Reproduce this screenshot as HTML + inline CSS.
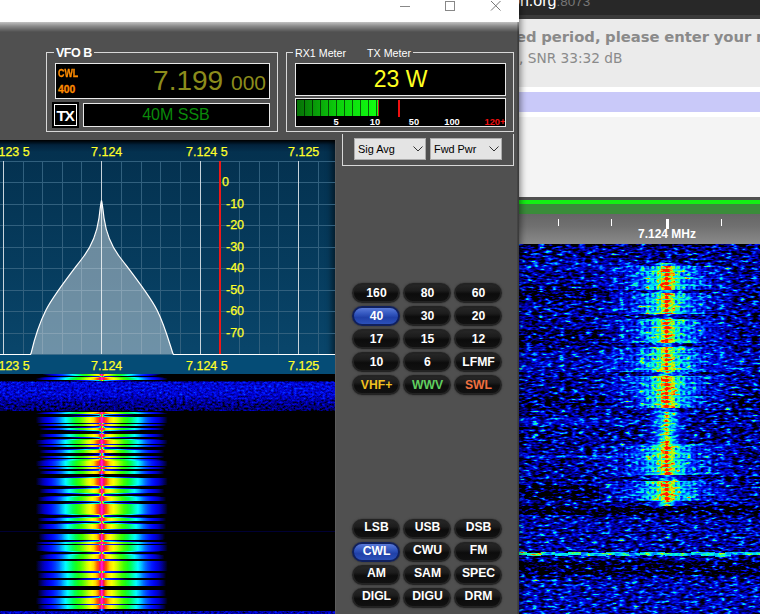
<!DOCTYPE html>
<html><head><meta charset="utf-8">
<style>
html,body{margin:0;padding:0;}
body{width:760px;height:614px;overflow:hidden;position:relative;background:#f4f4f4;font-family:"Liberation Sans",sans-serif;}
.abs{position:absolute;}
#br{left:519px;top:0;width:241px;height:614px;background:#f4f4f4;overflow:hidden;}
#win{left:0;top:0;width:519px;height:614px;background:#505050;overflow:hidden;box-shadow:0 0 7px 1px rgba(0,0,0,.55);}
.gb{position:absolute;border:1px solid #d8d8d8;box-sizing:border-box;}
.lbl{position:absolute;background:#505050;color:#fff;font-size:10.7px;line-height:12px;white-space:nowrap;}
.blk{position:absolute;background:#000;border:1px solid #e8e8e8;box-sizing:border-box;}
.pill{position:absolute;width:48px;height:20px;border-radius:10px;box-sizing:border-box;background:linear-gradient(#262626 0%,#1c1c1c 35%,#0c0c0c 55%,#111 100%);border:2px solid #232323;color:#fff;font-weight:bold;font-size:12.2px;line-height:16px;text-align:center;box-shadow:0 0 1.5px 0.5px rgba(50,50,50,.7);padding-left:1px;}
.pill.sel{background:linear-gradient(#5a7ad8 0%,#3458c0 35%,#2040a8 60%,#2c50b8 100%);border-color:#10205c;}
.combo{position:absolute;height:22px;background:#e4e4e4;border:1px solid #adadad;box-sizing:border-box;font-size:10.9px;line-height:20px;color:#000;padding-left:3px;}
.yl{position:absolute;color:#ffff28;font-size:12.5px;line-height:14px;white-space:nowrap;-webkit-text-stroke:0.25px #ffff28;}
</style></head><body>

<!-- browser behind -->
<div id="br" class="abs">
  <div class="abs" style="left:0;top:0;width:241px;height:15px;background:#282828;"></div>
  <div class="abs" style="left:0;top:15px;width:241px;height:4px;background:#3a3a3a;"></div>
  <div class="abs" style="left:-8px;top:-7.5px;color:#fff;font-size:16px;line-height:16px;white-space:nowrap;">on.org<span style="color:#777;font-size:13.5px">:8073</span></div>
  <div class="abs" style="left:0;top:19px;width:241px;height:68px;background:#ebebeb;"></div>
  <div class="abs" style="left:0;top:87px;width:241px;height:5px;background:#fff;"></div>
  <div class="abs" style="left:0;top:92px;width:241px;height:20px;background:#c9c9f9;"></div>
  <div class="abs" style="left:0;top:112px;width:241px;height:5px;background:#fff;"></div>
  <div class="abs" style="left:-3px;top:27px;color:#8a8a8a;font-weight:bold;font-size:14.8px;word-spacing:-0.6px;line-height:20px;white-space:nowrap;font-family:'DejaVu Sans','Liberation Sans',sans-serif;">ed period, please enter your name</div>
  <div class="abs" style="left:0px;top:50px;color:#8a8a8a;font-size:13.7px;line-height:16px;white-space:nowrap;font-family:'DejaVu Sans','Liberation Sans',sans-serif;">, SNR 33:32 dB</div>
  <div class="abs" style="left:0;top:197px;width:241px;height:3px;background:#505050;"></div>
  <div class="abs" style="left:0;top:200px;width:241px;height:4px;background:#14f014;"></div>
  <div class="abs" style="left:0;top:204px;width:241px;height:10px;background:#3a8c3a;"></div>
  <div class="abs" style="left:0;top:214px;width:241px;height:30px;background:linear-gradient(#666 0%,#707070 40%,#8a8a8a 100%);"></div>
  <div class="abs" style="left:39px;top:219px;width:1px;height:7px;background:#fff;"></div>
  <div class="abs" style="left:92px;top:219px;width:1px;height:7px;background:#fff;"></div>
  <div class="abs" style="left:147px;top:219px;width:3px;height:10px;background:#fff;"></div>
  <div class="abs" style="left:202px;top:219px;width:1px;height:7px;background:#fff;"></div>
  <div class="abs" style="left:98px;top:227px;width:100px;text-align:center;color:#fff;font-weight:bold;font-size:12px;line-height:14px;">7.124 MHz</div>
  <!-- WF2 -->
  <svg id="wf2" class="abs" style="left:0;top:244px" width="241" height="370" viewBox="0 0 241 370">
<defs><linearGradient id="sw" gradientUnits="userSpaceOnUse" x1="72.7" y1="0" x2="222.7" y2="0"><stop offset="0.0000" stop-color="#fff" stop-opacity="0.000"/><stop offset="0.1200" stop-color="#fff" stop-opacity="0.060"/><stop offset="0.2867" stop-color="#fff" stop-opacity="0.191"/><stop offset="0.3933" stop-color="#fff" stop-opacity="0.383"/><stop offset="0.4367" stop-color="#fff" stop-opacity="0.522"/><stop offset="0.4600" stop-color="#fff" stop-opacity="0.592"/><stop offset="0.4767" stop-color="#fff" stop-opacity="0.653"/><stop offset="0.4867" stop-color="#fff" stop-opacity="0.714"/><stop offset="0.5000" stop-color="#fff" stop-opacity="0.975"/><stop offset="0.5133" stop-color="#fff" stop-opacity="0.714"/><stop offset="0.5233" stop-color="#fff" stop-opacity="0.653"/><stop offset="0.5400" stop-color="#fff" stop-opacity="0.592"/><stop offset="0.5633" stop-color="#fff" stop-opacity="0.522"/><stop offset="0.6067" stop-color="#fff" stop-opacity="0.383"/><stop offset="0.7133" stop-color="#fff" stop-opacity="0.191"/><stop offset="0.8800" stop-color="#fff" stop-opacity="0.060"/><stop offset="1.0000" stop-color="#fff" stop-opacity="0.000"/></linearGradient><linearGradient id="sn" gradientUnits="userSpaceOnUse" x1="72.7" y1="0" x2="222.7" y2="0"><stop offset="0.0000" stop-color="#fff" stop-opacity="0.000"/><stop offset="0.3400" stop-color="#fff" stop-opacity="0.000"/><stop offset="0.3933" stop-color="#fff" stop-opacity="0.121"/><stop offset="0.4333" stop-color="#fff" stop-opacity="0.243"/><stop offset="0.4600" stop-color="#fff" stop-opacity="0.409"/><stop offset="0.4767" stop-color="#fff" stop-opacity="0.583"/><stop offset="0.4867" stop-color="#fff" stop-opacity="0.757"/><stop offset="0.5000" stop-color="#fff" stop-opacity="0.931"/><stop offset="0.5133" stop-color="#fff" stop-opacity="0.757"/><stop offset="0.5233" stop-color="#fff" stop-opacity="0.583"/><stop offset="0.5400" stop-color="#fff" stop-opacity="0.409"/><stop offset="0.5667" stop-color="#fff" stop-opacity="0.243"/><stop offset="0.6067" stop-color="#fff" stop-opacity="0.121"/><stop offset="0.6600" stop-color="#fff" stop-opacity="0.000"/><stop offset="1.0000" stop-color="#fff" stop-opacity="0.000"/></linearGradient><pattern id="teeth" width="5.2" height="7" patternUnits="userSpaceOnUse"><rect x="0" y="0" width="2.3" height="4.2" fill="#000"/><rect x="0" y="4.2" width="5.2" height="1.3" fill="#000" opacity="0.8"/></pattern>
<filter id="cm" x="0" y="0" width="1" height="1" color-interpolation-filters="sRGB">
<feTurbulence type="fractalNoise" baseFrequency="0.15 0.42" numOctaves="2" seed="4" result="n"/>
<feColorMatrix in="n" type="matrix" values="1 0 0 0 0 1 0 0 0 0 1 0 0 0 0 0 0 0 0 1" result="g0"/>
<feComponentTransfer in="g0" result="g"><feFuncR type="gamma" exponent="2.5"/><feFuncG type="gamma" exponent="2.5"/><feFuncB type="gamma" exponent="2.5"/></feComponentTransfer>
<feComposite in="SourceGraphic" in2="g" operator="arithmetic" k1="-1.0" k2="1.5" k3="1.32" k4="-0.262"/>
<feComponentTransfer><feFuncR type="table" tableValues="0 0 0 0 0 0 0 0.2 0.8 1 1"/><feFuncG type="table" tableValues="0 0 0 0.1 0.4 0.75 1 1 1 0.6 0.1"/><feFuncB type="table" tableValues="0 0.45 0.8 1 1 1 0.9 0.4 0 0 0"/></feComponentTransfer>
</filter></defs>
<g filter="url(#cm)"><rect x="0" y="0" width="241" height="371" fill="#1f1f1f"/><rect x="0" y="0" width="241" height="3" fill="#101010"/><rect x="0" y="18" width="120" height="8" fill="#2b2b2b"/><rect x="0" y="44" width="90" height="12" fill="#101010"/><rect x="0" y="86" width="100" height="15" fill="#141414"/><rect x="0" y="108" width="241" height="20" fill="#292929"/><rect x="0" y="151" width="241" height="13" fill="#141414"/><rect x="0" y="174" width="120" height="7" fill="#313131"/><rect x="0" y="211" width="140" height="3" fill="#313131"/><rect x="0" y="241" width="80" height="15" fill="#080808"/><rect x="0" y="262" width="241" height="9" fill="#080808"/><rect x="0" y="276" width="241" height="28" fill="#252525"/><rect x="0" y="317" width="241" height="15" fill="#0a0a0a"/><rect x="0" y="336" width="241" height="34" fill="#272727"/><rect x="0" y="308" width="8" height="3" fill="#818181"/><rect x="8" y="309" width="14" height="3" fill="#7b7b7b"/><rect x="22" y="308" width="14" height="3" fill="#676767"/><rect x="36" y="309" width="13" height="3" fill="#717171"/><rect x="49" y="308" width="13" height="3" fill="#8c8c8c"/><rect x="62" y="308" width="7" height="4" fill="#585858"/><rect x="69" y="309" width="11" height="3" fill="#6f6f6f"/><rect x="80" y="309" width="7" height="3" fill="#707070"/><rect x="87" y="308" width="9" height="3" fill="#717171"/><rect x="96" y="308" width="14" height="4" fill="#6e6e6e"/><rect x="110" y="309" width="11" height="3" fill="#5f5f5f"/><rect x="121" y="308" width="7" height="3" fill="#757575"/><rect x="128" y="308" width="7" height="4" fill="#646464"/><rect x="135" y="308" width="11" height="3" fill="#707070"/><rect x="146" y="309" width="13" height="3" fill="#737373"/><rect x="159" y="309" width="13" height="3" fill="#686868"/><rect x="172" y="308" width="10" height="3" fill="#6c6c6c"/><rect x="182" y="308" width="14" height="4" fill="#6c6c6c"/><rect x="196" y="309" width="10" height="4" fill="#797979"/><rect x="206" y="308" width="6" height="4" fill="#6e6e6e"/><rect x="212" y="308" width="14" height="3" fill="#5a5a5a"/><rect x="226" y="308" width="12" height="3" fill="#747474"/><rect x="238" y="308" width="10" height="3" fill="#717171"/><rect x="0" y="212" width="5" height="1" fill="#313131"/><rect x="5" y="211" width="5" height="3" fill="#3d3d3d"/><rect x="10" y="212" width="14" height="2" fill="#323232"/><rect x="24" y="211" width="5" height="1" fill="#313131"/><rect x="29" y="211" width="14" height="3" fill="#3b3b3b"/><rect x="43" y="211" width="9" height="1" fill="#3e3e3e"/><rect x="52" y="211" width="10" height="3" fill="#323232"/><rect x="62" y="212" width="11" height="3" fill="#383838"/><rect x="73" y="211" width="14" height="2" fill="#414141"/><rect x="87" y="212" width="11" height="2" fill="#3f3f3f"/><rect x="98" y="212" width="9" height="2" fill="#373737"/><rect x="107" y="212" width="13" height="2" fill="#333333"/><rect x="120" y="212" width="5" height="2" fill="#343434"/><rect x="125" y="212" width="5" height="3" fill="#3f3f3f"/><rect x="130" y="212" width="10" height="2" fill="#404040"/><rect x="72.7" y="19" width="150" height="3" fill="url(#sn)" opacity="0.60"/><rect x="72.7" y="22" width="150" height="24" fill="url(#sw)" opacity="1.00"/><rect x="72.7" y="46" width="150" height="3" fill="url(#sn)" opacity="0.50"/><rect x="72.7" y="49" width="150" height="21" fill="url(#sw)" opacity="0.95"/><rect x="72.7" y="70" width="150" height="5" fill="url(#sn)" opacity="0.25"/><rect x="72.7" y="75" width="150" height="24" fill="url(#sw)" opacity="0.95"/><rect x="72.7" y="99" width="150" height="4" fill="url(#sn)" opacity="0.40"/><rect x="72.7" y="103" width="150" height="25" fill="url(#sw)" opacity="0.90"/><rect x="72.7" y="128" width="150" height="4" fill="url(#sn)" opacity="0.60"/><rect x="72.7" y="132" width="150" height="32" fill="url(#sw)" opacity="1.00"/><rect x="72.7" y="164" width="150" height="4" fill="url(#sn)" opacity="0.35"/><rect x="72.7" y="168" width="150" height="32" fill="url(#sn)" opacity="0.75"/><rect x="72.7" y="200" width="150" height="31" fill="url(#sw)" opacity="0.95"/><rect x="72.7" y="231" width="150" height="6" fill="url(#sn)" opacity="0.40"/><rect x="72.7" y="237" width="150" height="20" fill="url(#sw)" opacity="1.00"/><rect x="72.7" y="257" width="150" height="5" fill="url(#sn)" opacity="0.70"/><rect x="97.7" y="22" width="44" height="24" fill="url(#teeth)" opacity="0.34"/><rect x="153.7" y="22" width="44" height="24" fill="url(#teeth)" opacity="0.34"/><rect x="97.7" y="49" width="44" height="21" fill="url(#teeth)" opacity="0.34"/><rect x="153.7" y="49" width="44" height="21" fill="url(#teeth)" opacity="0.34"/><rect x="97.7" y="75" width="44" height="24" fill="url(#teeth)" opacity="0.34"/><rect x="153.7" y="75" width="44" height="24" fill="url(#teeth)" opacity="0.34"/><rect x="97.7" y="103" width="44" height="25" fill="url(#teeth)" opacity="0.34"/><rect x="153.7" y="103" width="44" height="25" fill="url(#teeth)" opacity="0.34"/><rect x="97.7" y="132" width="44" height="32" fill="url(#teeth)" opacity="0.34"/><rect x="153.7" y="132" width="44" height="32" fill="url(#teeth)" opacity="0.34"/><rect x="97.7" y="200" width="44" height="31" fill="url(#teeth)" opacity="0.34"/><rect x="153.7" y="200" width="44" height="31" fill="url(#teeth)" opacity="0.34"/><rect x="97.7" y="237" width="44" height="20" fill="url(#teeth)" opacity="0.34"/><rect x="153.7" y="237" width="44" height="20" fill="url(#teeth)" opacity="0.34"/><rect x="143.2" y="20.5" width="9" height="1.3" fill="#000" opacity="0.33"/><rect x="143.2" y="23.5" width="9" height="1.3" fill="#000" opacity="0.33"/><rect x="143.2" y="27.8" width="9" height="1.3" fill="#000" opacity="0.33"/><rect x="143.2" y="32.1" width="9" height="1.3" fill="#000" opacity="0.33"/><rect x="143.2" y="36.4" width="9" height="1.3" fill="#000" opacity="0.33"/><rect x="143.2" y="40.7" width="9" height="1.3" fill="#000" opacity="0.33"/><rect x="143.2" y="47.5" width="9" height="1.3" fill="#000" opacity="0.33"/><rect x="143.2" y="50.5" width="9" height="1.3" fill="#000" opacity="0.33"/><rect x="143.2" y="54.8" width="9" height="1.3" fill="#000" opacity="0.33"/><rect x="143.2" y="59.1" width="9" height="1.3" fill="#000" opacity="0.33"/><rect x="143.2" y="63.4" width="9" height="1.3" fill="#000" opacity="0.33"/><rect x="143.2" y="67.7" width="9" height="1.3" fill="#000" opacity="0.33"/><rect x="143.2" y="71.5" width="9" height="1.3" fill="#000" opacity="0.33"/><rect x="143.2" y="76.5" width="9" height="1.3" fill="#000" opacity="0.33"/><rect x="143.2" y="80.8" width="9" height="1.3" fill="#000" opacity="0.33"/><rect x="143.2" y="85.1" width="9" height="1.3" fill="#000" opacity="0.33"/><rect x="143.2" y="89.4" width="9" height="1.3" fill="#000" opacity="0.33"/><rect x="143.2" y="93.7" width="9" height="1.3" fill="#000" opacity="0.33"/><rect x="143.2" y="100.5" width="9" height="1.3" fill="#000" opacity="0.33"/><rect x="143.2" y="104.5" width="9" height="1.3" fill="#000" opacity="0.33"/><rect x="143.2" y="108.8" width="9" height="1.3" fill="#000" opacity="0.33"/><rect x="143.2" y="113.1" width="9" height="1.3" fill="#000" opacity="0.33"/><rect x="143.2" y="117.4" width="9" height="1.3" fill="#000" opacity="0.33"/><rect x="143.2" y="121.7" width="9" height="1.3" fill="#000" opacity="0.33"/><rect x="143.2" y="126.0" width="9" height="1.3" fill="#000" opacity="0.33"/><rect x="143.2" y="129.5" width="9" height="1.3" fill="#000" opacity="0.33"/><rect x="143.2" y="133.5" width="9" height="1.3" fill="#000" opacity="0.33"/><rect x="143.2" y="137.8" width="9" height="1.3" fill="#000" opacity="0.33"/><rect x="143.2" y="142.1" width="9" height="1.3" fill="#000" opacity="0.33"/><rect x="143.2" y="146.4" width="9" height="1.3" fill="#000" opacity="0.33"/><rect x="143.2" y="150.7" width="9" height="1.3" fill="#000" opacity="0.33"/><rect x="143.2" y="155.0" width="9" height="1.3" fill="#000" opacity="0.33"/><rect x="143.2" y="159.3" width="9" height="1.3" fill="#000" opacity="0.33"/><rect x="143.2" y="165.5" width="9" height="1.3" fill="#000" opacity="0.33"/><rect x="143.2" y="169.5" width="9" height="1.3" fill="#000" opacity="0.33"/><rect x="143.2" y="173.8" width="9" height="1.3" fill="#000" opacity="0.33"/><rect x="143.2" y="178.1" width="9" height="1.3" fill="#000" opacity="0.33"/><rect x="143.2" y="182.4" width="9" height="1.3" fill="#000" opacity="0.33"/><rect x="143.2" y="186.7" width="9" height="1.3" fill="#000" opacity="0.33"/><rect x="143.2" y="191.0" width="9" height="1.3" fill="#000" opacity="0.33"/><rect x="143.2" y="195.3" width="9" height="1.3" fill="#000" opacity="0.33"/><rect x="143.2" y="201.5" width="9" height="1.3" fill="#000" opacity="0.33"/><rect x="143.2" y="205.8" width="9" height="1.3" fill="#000" opacity="0.33"/><rect x="143.2" y="210.1" width="9" height="1.3" fill="#000" opacity="0.33"/><rect x="143.2" y="214.4" width="9" height="1.3" fill="#000" opacity="0.33"/><rect x="143.2" y="218.7" width="9" height="1.3" fill="#000" opacity="0.33"/><rect x="143.2" y="223.0" width="9" height="1.3" fill="#000" opacity="0.33"/><rect x="143.2" y="227.3" width="9" height="1.3" fill="#000" opacity="0.33"/><rect x="143.2" y="232.5" width="9" height="1.3" fill="#000" opacity="0.33"/><rect x="143.2" y="238.5" width="9" height="1.3" fill="#000" opacity="0.33"/><rect x="143.2" y="242.8" width="9" height="1.3" fill="#000" opacity="0.33"/><rect x="143.2" y="247.1" width="9" height="1.3" fill="#000" opacity="0.33"/><rect x="143.2" y="251.4" width="9" height="1.3" fill="#000" opacity="0.33"/><rect x="143.2" y="255.7" width="9" height="1.3" fill="#000" opacity="0.33"/><rect x="143.2" y="258.5" width="9" height="1.3" fill="#000" opacity="0.33"/></g>
</svg>
</div>

<!-- PowerSDR window -->
<div id="win" class="abs">
  <div class="abs" style="left:0;top:0;width:519px;height:22px;background:#fff;"></div>
  <div class="abs" style="left:0;top:22px;width:519px;height:10px;background:linear-gradient(#c2c2c2,#8c8c8c 40%,#505050);"></div>
  <div class="abs" style="left:517px;top:22px;width:2px;height:592px;background:linear-gradient(90deg,rgba(0,0,0,.12),rgba(0,0,0,.3));"></div>
  <!-- window controls -->
  <svg class="abs" style="left:390px;top:0" width="129" height="22" viewBox="0 0 129 22">
    <path d="M10 6.5H20" stroke="#888" stroke-width="1" fill="none"/>
    <rect x="55.5" y="1.5" width="9" height="9" stroke="#888" stroke-width="1" fill="none"/>
    <path d="M101 1L110.5 10.5M110.5 1L101 10.5" stroke="#777" stroke-width="1" fill="none"/>
  </svg>

  <!-- VFO B -->
  <div class="gb" style="left:46px;top:52px;width:232px;height:80px;"></div>
  <div class="lbl" style="left:54px;top:47px;padding:0 2px;font-weight:bold;font-size:12.5px;letter-spacing:-0.5px;">VFO B</div>
  <div class="blk" style="left:55px;top:63px;width:215px;height:36px;"></div>
  <div class="abs" style="left:58px;top:69px;color:#ff8c00;font-weight:bold;font-size:10.3px;line-height:10px;-webkit-text-stroke:.3px #ff8c00;transform:scaleX(.86);transform-origin:0 0;">CWL</div>
  <div class="abs" style="left:58px;top:85px;color:#ff8c00;font-weight:bold;font-size:10.3px;line-height:10px;-webkit-text-stroke:.3px #ff8c00;transform:scaleX(1.0);transform-origin:0 0;">400</div>
  <div class="abs" style="left:98px;top:64px;width:168px;text-align:right;color:#8c8c1c;font-size:28px;line-height:34px;white-space:nowrap;">7.199 <span style="font-size:21px">000</span></div>
  <div class="abs" style="left:52px;top:102px;width:27px;height:26px;background:#000;"></div>
  <div class="abs" style="left:54px;top:104px;width:23px;height:22px;border:1px solid #fff;box-sizing:border-box;color:#fff;font-weight:bold;font-size:15.5px;line-height:21px;text-align:center;letter-spacing:-1.5px;text-indent:-1px;">TX</div>
  <div class="blk" style="left:83px;top:103px;width:187px;height:24px;color:#0a8a0a;font-size:16px;line-height:21px;text-align:center;text-indent:-1px;">40M SSB</div>

  <!-- Meters -->
  <div class="gb" style="left:286px;top:52px;width:228px;height:80px;"></div>
  <div class="lbl" style="left:293px;top:46.5px;padding:0 2px;width:80px;">RX1 Meter</div>
  <div class="lbl" style="left:365px;top:46.5px;padding:0 2px;">TX Meter</div>
  <div class="blk" style="left:295px;top:63px;width:211px;height:33px;color:#ffff20;font-size:23px;line-height:31px;text-align:center;">23 W</div>
  <div class="blk" style="left:295px;top:98px;width:211px;height:29px;overflow:hidden;">
    <div class="abs" style="left:1px;top:1px;width:81px;height:16px;background:repeating-linear-gradient(90deg,transparent 0,transparent 7px,rgba(0,0,0,.6) 7px,rgba(0,0,0,.6) 8px),linear-gradient(90deg,#067006,#0cd00c 50%,#10ff10);"></div>
    <div class="abs" style="left:82px;top:1px;width:1px;height:16px;background:#c02020;"></div>
    <div class="abs" style="left:102px;top:1px;width:2px;height:17px;background:#f01010;"></div>
    <div class="abs" style="left:35px;top:17.5px;width:10px;text-align:center;color:#fff;font-weight:bold;font-size:9.3px;line-height:10px;">5</div>
    <div class="abs" style="left:71px;top:17.5px;width:16px;text-align:center;color:#fff;font-weight:bold;font-size:9.3px;line-height:10px;">10</div>
    <div class="abs" style="left:110px;top:17.5px;width:16px;text-align:center;color:#fff;font-weight:bold;font-size:9.3px;line-height:10px;">50</div>
    <div class="abs" style="left:145px;top:17.5px;width:22px;text-align:center;color:#fff;font-weight:bold;font-size:9.3px;line-height:10px;">100</div>
    <div class="abs" style="left:187px;top:17.5px;width:24px;text-align:center;color:#f01010;font-weight:bold;font-size:9.3px;line-height:10px;">120+</div>
  </div>
  <div class="abs" style="left:342px;top:134px;width:172px;height:32px;border:1px solid #d8d8d8;border-top:none;box-sizing:border-box;"></div>
  <div class="combo" style="left:354px;top:138px;width:72px;">Sig Avg
    <svg class="abs" style="right:2.5px;top:7px" width="10" height="6" viewBox="0 0 10 6"><path d="M0.5 0.5L5 5L9.5 0.5" stroke="#333" fill="none"/></svg></div>
  <div class="combo" style="left:430px;top:138px;width:72px;">Fwd Pwr
    <svg class="abs" style="right:2.5px;top:7px" width="10" height="6" viewBox="0 0 10 6"><path d="M0.5 0.5L5 5L9.5 0.5" stroke="#333" fill="none"/></svg></div>

  <!-- Spectrum -->
  <div id="spec" class="abs" style="left:0;top:140px;width:335px;height:234px;background:linear-gradient(#000 0,#02223c 5px,#04314f 12px,#063c5e 55%,#0a486e 100%);overflow:hidden;box-shadow:inset -7px 0 6px -4px rgba(0,0,0,.55);">
    <svg class="abs" style="left:0;top:0" width="335" height="234" viewBox="0 140 335 234">
      <g stroke="#31607e" stroke-width="1">
        <path d="M23.5 161V354M42.5 161V354M62.5 161V354M81.5 161V354M121.5 161V354M141.5 161V354M160.5 161V354M180.5 161V354M239.5 161V354M259.5 161V354M278.5 161V354M318.5 161V354"/>
        <path d="M0 161.5H335M0 182.5H335M0 204.5H335M0 225.5H335M0 247.5H335M0 268.5H335M0 290.5H335M0 311.5H335M0 333.5H335"/>
      </g>
      <path d="M3.5 161V354M101.5 161V354M200.5 161V354M298.5 161V354" stroke="#c8d4dc" stroke-width="1"/>
      <path d="M30.5 354.5L31 353.6C33 345 38 326 46 310C55 293 72 272 84 256C93 244 97 232 99 218C100 210 100.6 204 101.5 200.5C102.4 204 103 210 104 218C106 232 110 244 119 256C131 272 148 293 157 310C165 326 170 345 172.9 353.6L173.5 354.5Z" fill="rgba(255,255,255,.41)"/><path d="M30.5 354.5L31 353.6C33 345 38 326 46 310C55 293 72 272 84 256C93 244 97 232 99 218C100 210 100.6 204 101.5 200.5C102.4 204 103 210 104 218C106 232 110 244 119 256C131 272 148 293 157 310C165 326 170 345 172.9 353.6L173.5 354.5" fill="none" stroke="#fff" stroke-width="1.2"/>
      <rect x="0" y="355" width="335" height="19" fill="#054c76"/>
      <path d="M0 354.5H31M173 354.5H335" stroke="#fff" stroke-width="1"/>
      <path d="M220 161V354" stroke="#f01818" stroke-width="2"/>
    </svg>
    <div class="yl" style="left:-12px;top:5px;">7.123 5</div>
    <div class="yl" style="left:91px;top:5px;">7.124</div>
    <div class="yl" style="left:186px;top:5px;">7.124 5</div>
    <div class="yl" style="left:288px;top:5px;">7.125</div>
    <div class="yl" style="left:-12px;top:219px;">7.123 5</div>
    <div class="yl" style="left:91px;top:219px;">7.124</div>
    <div class="yl" style="left:186px;top:219px;">7.124 5</div>
    <div class="yl" style="left:288px;top:219px;">7.125</div>
    <div class="yl" style="left:222px;top:35px;">0</div>
    <div class="yl" style="left:226px;top:57px;">-10</div>
    <div class="yl" style="left:226px;top:78px;">-20</div>
    <div class="yl" style="left:226px;top:100px;">-30</div>
    <div class="yl" style="left:226px;top:121px;">-40</div>
    <div class="yl" style="left:226px;top:143px;">-50</div>
    <div class="yl" style="left:226px;top:164px;">-60</div>
    <div class="yl" style="left:226px;top:186px;">-70</div>
  </div>
  <!-- WF1 -->
  <svg id="wf1" class="abs" style="left:0;top:374px" width="335" height="240" viewBox="0 0 335 240"><defs><linearGradient id="tri" x1="0" y1="0" x2="1" y2="0"><stop offset="0" stop-color="#000"/><stop offset="0.05" stop-color="#1e1e1e"/><stop offset="0.5" stop-color="#f6f6f6"/><stop offset="0.95" stop-color="#1e1e1e"/><stop offset="1" stop-color="#000"/></linearGradient><linearGradient id="cl" x1="0" y1="0" x2="1" y2="0"><stop offset="0" stop-color="#fff" stop-opacity="0"/><stop offset="0.3" stop-color="#fff" stop-opacity="0.45"/><stop offset="0.45" stop-color="#fff" stop-opacity="1"/><stop offset="0.55" stop-color="#fff" stop-opacity="1"/><stop offset="0.7" stop-color="#fff" stop-opacity="0.45"/><stop offset="1" stop-color="#fff" stop-opacity="0"/></linearGradient><filter id="cmL" x="0" y="0" width="1" height="1" color-interpolation-filters="sRGB"><feComponentTransfer><feFuncR type="table" tableValues="0 0 0 0 0 0 0 0 0 0 0 0 0.1 0.25 0.5 0.8 1 1 1 1 1"/><feFuncG type="table" tableValues="0 0 0 0 0.02 0.1 0.25 0.45 0.75 1 1 1 1 1 1 1 1 0.85 0.35 0.05 0.1"/><feFuncB type="table" tableValues="0 0.3 0.55 0.8 0.95 1 1 1 1 1 0.7 0.35 0.1 0 0 0 0 0 0 0.35 0.8"/></feComponentTransfer></filter><filter id="bn" x="0" y="0" width="1" height="1" color-interpolation-filters="sRGB"><feTurbulence type="fractalNoise" baseFrequency="0.35 0.5" numOctaves="2" seed="11" result="n"/><feColorMatrix in="n" type="matrix" values="1 0 0 0 0 1 0 0 0 0 1 0 0 0 0 0 0 0 0 1" result="g"/><feComposite in="SourceGraphic" in2="g" operator="arithmetic" k1="0" k2="1" k3="0.46" k4="-0.23"/><feComponentTransfer><feFuncR type="table" tableValues="0 0 0 0 0 0 0 0.2 0.8 1 1"/><feFuncG type="table" tableValues="0 0 0 0.1 0.4 0.75 1 1 1 0.6 0.1"/><feFuncB type="table" tableValues="0 0.45 0.8 1 1 1 0.9 0.4 0 0 0"/></feComponentTransfer></filter><linearGradient id="bg1" x1="0" y1="0" x2="0" y2="1"><stop offset="0" stop-color="#3a3a3a"/><stop offset="0.45" stop-color="#363636"/><stop offset="0.7" stop-color="#232323"/><stop offset="1" stop-color="#171717"/></linearGradient></defs><rect x="0" y="0" width="335" height="240" fill="#000"/><g filter="url(#bn)"><rect x="0" y="7.5" width="335" height="29.5" fill="url(#bg1)"/></g><g filter="url(#bn)"><rect x="0" y="237" width="335" height="3" fill="#2c2c2c"/></g><g filter="url(#cmL)"><rect x="0" y="0" width="335" height="7" fill="#000"/><rect x="0" y="38" width="335" height="199" fill="#000"/><rect x="42.4" y="0" width="118.8" height="1" fill="url(#tri)" opacity="0.90"/><rect x="45.7" y="1" width="112.2" height="1" fill="url(#tri)" opacity="0.85"/><rect x="82.0" y="2" width="39.6" height="1" fill="url(#tri)" opacity="0.30"/><rect x="39.1" y="3" width="125.4" height="1" fill="url(#tri)" opacity="0.95"/><rect x="35.8" y="4" width="132.0" height="1" fill="url(#tri)"/><rect x="35.8" y="5" width="132.0" height="1" fill="url(#tri)"/><rect x="68.8" y="6" width="66.0" height="1" fill="url(#tri)" opacity="0.50"/><rect x="39.1" y="38" width="125.4" height="1" fill="url(#tri)" opacity="0.95"/><rect x="35.8" y="39" width="132.0" height="1" fill="url(#tri)"/><rect x="68.8" y="40" width="66.0" height="1" fill="url(#tri)" opacity="0.50"/><rect x="93.9" y="41" width="15.8" height="1" fill="url(#tri)" opacity="0.12"/><rect x="68.8" y="42" width="66.0" height="1" fill="url(#tri)" opacity="0.50"/><rect x="35.8" y="43" width="132.0" height="1" fill="url(#tri)"/><rect x="35.8" y="44" width="132.0" height="1" fill="url(#tri)"/><rect x="35.8" y="45" width="132.0" height="1" fill="url(#tri)"/><rect x="35.8" y="46" width="132.0" height="1" fill="url(#tri)"/><rect x="35.8" y="47" width="132.0" height="1" fill="url(#tri)"/><rect x="35.8" y="48" width="132.0" height="1" fill="url(#tri)"/><rect x="82.0" y="49" width="39.6" height="1" fill="url(#tri)" opacity="0.30"/><rect x="37.5" y="50" width="128.7" height="1" fill="url(#tri)" opacity="0.97"/><rect x="37.5" y="51" width="128.7" height="1" fill="url(#tri)" opacity="0.97"/><rect x="85.3" y="52" width="33.0" height="1" fill="url(#tri)" opacity="0.25"/><rect x="72.1" y="53" width="59.4" height="1" fill="url(#tri)" opacity="0.45"/><rect x="39.1" y="54" width="125.4" height="1" fill="url(#tri)" opacity="0.95"/><rect x="39.1" y="55" width="125.4" height="1" fill="url(#tri)" opacity="0.95"/><rect x="62.2" y="56" width="79.2" height="1" fill="url(#tri)" opacity="0.60"/><rect x="91.9" y="57" width="19.8" height="1" fill="url(#tri)" opacity="0.15"/><rect x="95.2" y="58" width="13.2" height="1" fill="url(#tri)" opacity="0.10"/><rect x="88.6" y="59" width="26.4" height="1" fill="url(#tri)" opacity="0.20"/><rect x="39.1" y="60" width="125.4" height="1" fill="url(#tri)" opacity="0.95"/><rect x="39.1" y="61" width="125.4" height="1" fill="url(#tri)" opacity="0.95"/><rect x="39.1" y="62" width="125.4" height="1" fill="url(#tri)" opacity="0.95"/><rect x="68.8" y="63" width="66.0" height="1" fill="url(#tri)" opacity="0.50"/><rect x="91.9" y="64" width="19.8" height="1" fill="url(#tri)" opacity="0.15"/><rect x="42.4" y="65" width="118.8" height="1" fill="url(#tri)" opacity="0.90"/><rect x="35.8" y="66" width="132.0" height="1" fill="url(#tri)"/><rect x="35.8" y="67" width="132.0" height="1" fill="url(#tri)"/><rect x="35.8" y="68" width="132.0" height="1" fill="url(#tri)"/><rect x="35.8" y="69" width="132.0" height="1" fill="url(#tri)"/><rect x="78.7" y="70" width="46.2" height="1" fill="url(#tri)" opacity="0.35"/><rect x="37.5" y="71" width="128.7" height="1" fill="url(#tri)" opacity="0.97"/><rect x="37.5" y="72" width="128.7" height="1" fill="url(#tri)" opacity="0.97"/><rect x="82.0" y="73" width="39.6" height="1" fill="url(#tri)" opacity="0.30"/><rect x="82.0" y="74" width="39.6" height="1" fill="url(#tri)" opacity="0.30"/><rect x="55.6" y="75" width="92.4" height="1" fill="url(#tri)" opacity="0.70"/><rect x="39.1" y="76" width="125.4" height="1" fill="url(#tri)" opacity="0.95"/><rect x="39.1" y="77" width="125.4" height="1" fill="url(#tri)" opacity="0.95"/><rect x="39.1" y="78" width="125.4" height="1" fill="url(#tri)" opacity="0.95"/><rect x="88.6" y="79" width="26.4" height="1" fill="url(#tri)" opacity="0.20"/><rect x="93.9" y="80" width="15.8" height="1" fill="url(#tri)" opacity="0.12"/><rect x="82.0" y="81" width="39.6" height="1" fill="url(#tri)" opacity="0.30"/><rect x="39.1" y="82" width="125.4" height="1" fill="url(#tri)" opacity="0.95"/><rect x="39.1" y="83" width="125.4" height="1" fill="url(#tri)" opacity="0.95"/><rect x="78.7" y="84" width="46.2" height="1" fill="url(#tri)" opacity="0.35"/><rect x="42.4" y="85" width="118.8" height="1" fill="url(#tri)" opacity="0.90"/><rect x="39.1" y="86" width="125.4" height="1" fill="url(#tri)" opacity="0.95"/><rect x="35.8" y="87" width="132.0" height="1" fill="url(#tri)"/><rect x="35.8" y="88" width="132.0" height="1" fill="url(#tri)"/><rect x="35.8" y="89" width="132.0" height="1" fill="url(#tri)"/><rect x="35.8" y="90" width="132.0" height="1" fill="url(#tri)"/><rect x="35.8" y="91" width="132.0" height="1" fill="url(#tri)"/><rect x="78.7" y="92" width="46.2" height="1" fill="url(#tri)" opacity="0.35"/><rect x="37.5" y="93" width="128.7" height="1" fill="url(#tri)" opacity="0.97"/><rect x="37.5" y="94" width="128.7" height="1" fill="url(#tri)" opacity="0.97"/><rect x="82.0" y="95" width="39.6" height="1" fill="url(#tri)" opacity="0.30"/><rect x="75.4" y="96" width="52.8" height="1" fill="url(#tri)" opacity="0.40"/><rect x="39.1" y="97" width="125.4" height="1" fill="url(#tri)" opacity="0.95"/><rect x="39.1" y="98" width="125.4" height="1" fill="url(#tri)" opacity="0.95"/><rect x="39.1" y="99" width="125.4" height="1" fill="url(#tri)" opacity="0.95"/><rect x="98.5" y="100" width="6.6" height="1" fill="url(#tri)" opacity="0.05"/><rect x="98.5" y="102" width="6.6" height="1" fill="url(#tri)" opacity="0.05"/><rect x="62.2" y="103" width="79.2" height="1" fill="url(#tri)" opacity="0.60"/><rect x="35.8" y="104" width="132.0" height="1" fill="url(#tri)"/><rect x="35.8" y="105" width="132.0" height="1" fill="url(#tri)"/><rect x="35.8" y="106" width="132.0" height="1" fill="url(#tri)"/><rect x="35.8" y="107" width="132.0" height="1" fill="url(#tri)"/><rect x="35.8" y="108" width="132.0" height="1" fill="url(#tri)"/><rect x="35.8" y="109" width="132.0" height="1" fill="url(#tri)"/><rect x="35.8" y="110" width="132.0" height="1" fill="url(#tri)"/><rect x="39.1" y="111" width="125.4" height="1" fill="url(#tri)" opacity="0.95"/><rect x="82.0" y="112" width="39.6" height="1" fill="url(#tri)" opacity="0.30"/><rect x="85.3" y="113" width="33.0" height="1" fill="url(#tri)" opacity="0.25"/><rect x="62.2" y="114" width="79.2" height="1" fill="url(#tri)" opacity="0.60"/><rect x="39.1" y="115" width="125.4" height="1" fill="url(#tri)" opacity="0.95"/><rect x="39.1" y="116" width="125.4" height="1" fill="url(#tri)" opacity="0.95"/><rect x="39.1" y="117" width="125.4" height="1" fill="url(#tri)" opacity="0.95"/><rect x="39.1" y="118" width="125.4" height="1" fill="url(#tri)" opacity="0.95"/><rect x="55.6" y="119" width="92.4" height="1" fill="url(#tri)" opacity="0.70"/><rect x="85.3" y="120" width="33.0" height="1" fill="url(#tri)" opacity="0.25"/><rect x="82.0" y="121" width="39.6" height="1" fill="url(#tri)" opacity="0.30"/><rect x="42.4" y="122" width="118.8" height="1" fill="url(#tri)" opacity="0.90"/><rect x="37.5" y="123" width="128.7" height="1" fill="url(#tri)" opacity="0.97"/><rect x="37.5" y="124" width="128.7" height="1" fill="url(#tri)" opacity="0.97"/><rect x="37.5" y="125" width="128.7" height="1" fill="url(#tri)" opacity="0.97"/><rect x="37.5" y="126" width="128.7" height="1" fill="url(#tri)" opacity="0.97"/><rect x="68.8" y="127" width="66.0" height="1" fill="url(#tri)" opacity="0.50"/><rect x="88.6" y="128" width="26.4" height="1" fill="url(#tri)" opacity="0.20"/><rect x="62.2" y="129" width="79.2" height="1" fill="url(#tri)" opacity="0.60"/><rect x="35.8" y="130" width="132.0" height="1" fill="url(#tri)"/><rect x="35.8" y="131" width="132.0" height="1" fill="url(#tri)"/><rect x="35.8" y="132" width="132.0" height="1" fill="url(#tri)"/><rect x="35.8" y="133" width="132.0" height="1" fill="url(#tri)"/><rect x="35.8" y="134" width="132.0" height="1" fill="url(#tri)"/><rect x="35.8" y="135" width="132.0" height="1" fill="url(#tri)"/><rect x="35.8" y="136" width="132.0" height="1" fill="url(#tri)"/><rect x="35.8" y="137" width="132.0" height="1" fill="url(#tri)"/><rect x="35.8" y="138" width="132.0" height="1" fill="url(#tri)"/><rect x="35.8" y="139" width="132.0" height="1" fill="url(#tri)"/><rect x="42.4" y="140" width="118.8" height="1" fill="url(#tri)" opacity="0.90"/><rect x="82.0" y="141" width="39.6" height="1" fill="url(#tri)" opacity="0.30"/><rect x="85.3" y="142" width="33.0" height="1" fill="url(#tri)" opacity="0.25"/><rect x="55.6" y="143" width="92.4" height="1" fill="url(#tri)" opacity="0.70"/><rect x="37.5" y="144" width="128.7" height="1" fill="url(#tri)" opacity="0.97"/><rect x="37.5" y="145" width="128.7" height="1" fill="url(#tri)" opacity="0.97"/><rect x="37.5" y="146" width="128.7" height="1" fill="url(#tri)" opacity="0.97"/><rect x="68.8" y="147" width="66.0" height="1" fill="url(#tri)" opacity="0.50"/><rect x="88.6" y="148" width="26.4" height="1" fill="url(#tri)" opacity="0.20"/><rect x="55.6" y="149" width="92.4" height="1" fill="url(#tri)" opacity="0.70"/><rect x="37.5" y="150" width="128.7" height="1" fill="url(#tri)" opacity="0.97"/><rect x="37.5" y="151" width="128.7" height="1" fill="url(#tri)" opacity="0.97"/><rect x="37.5" y="152" width="128.7" height="1" fill="url(#tri)" opacity="0.97"/><rect x="37.5" y="153" width="128.7" height="1" fill="url(#tri)" opacity="0.97"/><rect x="37.5" y="154" width="128.7" height="1" fill="url(#tri)" opacity="0.97"/><rect x="68.8" y="155" width="66.0" height="1" fill="url(#tri)" opacity="0.50"/><rect x="82.0" y="159" width="39.6" height="1" fill="url(#tri)" opacity="0.30"/><rect x="38.4" y="160" width="126.7" height="1" fill="url(#tri)" opacity="0.96"/><rect x="38.4" y="161" width="126.7" height="1" fill="url(#tri)" opacity="0.96"/><rect x="38.4" y="162" width="126.7" height="1" fill="url(#tri)" opacity="0.96"/><rect x="38.4" y="163" width="126.7" height="1" fill="url(#tri)" opacity="0.96"/><rect x="38.4" y="164" width="126.7" height="1" fill="url(#tri)" opacity="0.96"/><rect x="39.1" y="165" width="125.4" height="1" fill="url(#tri)" opacity="0.95"/><rect x="82.0" y="166" width="39.6" height="1" fill="url(#tri)" opacity="0.30"/><rect x="62.2" y="167" width="79.2" height="1" fill="url(#tri)" opacity="0.60"/><rect x="35.8" y="168" width="132.0" height="1" fill="url(#tri)"/><rect x="35.8" y="169" width="132.0" height="1" fill="url(#tri)"/><rect x="75.4" y="170" width="52.8" height="1" fill="url(#tri)" opacity="0.40"/><rect x="35.8" y="171" width="132.0" height="1" fill="url(#tri)"/><rect x="35.8" y="172" width="132.0" height="1" fill="url(#tri)"/><rect x="35.8" y="173" width="132.0" height="1" fill="url(#tri)"/><rect x="35.8" y="174" width="132.0" height="1" fill="url(#tri)"/><rect x="35.8" y="175" width="132.0" height="1" fill="url(#tri)"/><rect x="35.8" y="176" width="132.0" height="1" fill="url(#tri)"/><rect x="42.4" y="177" width="118.8" height="1" fill="url(#tri)" opacity="0.90"/><rect x="85.3" y="178" width="33.0" height="1" fill="url(#tri)" opacity="0.25"/><rect x="82.0" y="179" width="39.6" height="1" fill="url(#tri)" opacity="0.30"/><rect x="42.4" y="180" width="118.8" height="1" fill="url(#tri)" opacity="0.90"/><rect x="39.1" y="181" width="125.4" height="1" fill="url(#tri)" opacity="0.95"/><rect x="39.1" y="182" width="125.4" height="1" fill="url(#tri)" opacity="0.95"/><rect x="39.1" y="183" width="125.4" height="1" fill="url(#tri)" opacity="0.95"/><rect x="39.1" y="184" width="125.4" height="1" fill="url(#tri)" opacity="0.95"/><rect x="82.0" y="185" width="39.6" height="1" fill="url(#tri)" opacity="0.30"/><rect x="75.4" y="186" width="52.8" height="1" fill="url(#tri)" opacity="0.40"/><rect x="35.8" y="187" width="132.0" height="1" fill="url(#tri)"/><rect x="35.8" y="188" width="132.0" height="1" fill="url(#tri)"/><rect x="35.8" y="189" width="132.0" height="1" fill="url(#tri)"/><rect x="35.8" y="190" width="132.0" height="1" fill="url(#tri)"/><rect x="35.8" y="191" width="132.0" height="1" fill="url(#tri)"/><rect x="35.8" y="192" width="132.0" height="1" fill="url(#tri)"/><rect x="35.8" y="193" width="132.0" height="1" fill="url(#tri)"/><rect x="35.8" y="194" width="132.0" height="1" fill="url(#tri)"/><rect x="35.8" y="195" width="132.0" height="1" fill="url(#tri)"/><rect x="35.8" y="196" width="132.0" height="1" fill="url(#tri)"/><rect x="75.4" y="197" width="52.8" height="1" fill="url(#tri)" opacity="0.40"/><rect x="78.7" y="198" width="46.2" height="1" fill="url(#tri)" opacity="0.35"/><rect x="37.5" y="199" width="128.7" height="1" fill="url(#tri)" opacity="0.97"/><rect x="37.5" y="200" width="128.7" height="1" fill="url(#tri)" opacity="0.97"/><rect x="37.5" y="201" width="128.7" height="1" fill="url(#tri)" opacity="0.97"/><rect x="37.5" y="202" width="128.7" height="1" fill="url(#tri)" opacity="0.97"/><rect x="37.5" y="203" width="128.7" height="1" fill="url(#tri)" opacity="0.97"/><rect x="78.7" y="204" width="46.2" height="1" fill="url(#tri)" opacity="0.35"/><rect x="75.4" y="205" width="52.8" height="1" fill="url(#tri)" opacity="0.40"/><rect x="37.5" y="206" width="128.7" height="1" fill="url(#tri)" opacity="0.97"/><rect x="37.5" y="207" width="128.7" height="1" fill="url(#tri)" opacity="0.97"/><rect x="37.5" y="208" width="128.7" height="1" fill="url(#tri)" opacity="0.97"/><rect x="37.5" y="209" width="128.7" height="1" fill="url(#tri)" opacity="0.97"/><rect x="37.5" y="210" width="128.7" height="1" fill="url(#tri)" opacity="0.97"/><rect x="37.5" y="211" width="128.7" height="1" fill="url(#tri)" opacity="0.97"/><rect x="98.5" y="212" width="6.6" height="1" fill="url(#tri)" opacity="0.05"/><rect x="98.5" y="215" width="6.6" height="1" fill="url(#tri)" opacity="0.05"/><rect x="37.5" y="216" width="128.7" height="1" fill="url(#tri)" opacity="0.97"/><rect x="37.5" y="217" width="128.7" height="1" fill="url(#tri)" opacity="0.97"/><rect x="37.5" y="218" width="128.7" height="1" fill="url(#tri)" opacity="0.97"/><rect x="37.5" y="219" width="128.7" height="1" fill="url(#tri)" opacity="0.97"/><rect x="37.5" y="220" width="128.7" height="1" fill="url(#tri)" opacity="0.97"/><rect x="37.5" y="221" width="128.7" height="1" fill="url(#tri)" opacity="0.97"/><rect x="82.0" y="222" width="39.6" height="1" fill="url(#tri)" opacity="0.30"/><rect x="68.8" y="223" width="66.0" height="1" fill="url(#tri)" opacity="0.50"/><rect x="35.8" y="224" width="132.0" height="1" fill="url(#tri)"/><rect x="35.8" y="225" width="132.0" height="1" fill="url(#tri)"/><rect x="35.8" y="226" width="132.0" height="1" fill="url(#tri)"/><rect x="35.8" y="227" width="132.0" height="1" fill="url(#tri)"/><rect x="35.8" y="228" width="132.0" height="1" fill="url(#tri)"/><rect x="35.8" y="229" width="132.0" height="1" fill="url(#tri)"/><rect x="75.4" y="230" width="52.8" height="1" fill="url(#tri)" opacity="0.40"/><rect x="37.5" y="231" width="128.7" height="1" fill="url(#tri)" opacity="0.97"/><rect x="37.5" y="232" width="128.7" height="1" fill="url(#tri)" opacity="0.97"/><rect x="37.5" y="233" width="128.7" height="1" fill="url(#tri)" opacity="0.97"/><rect x="37.5" y="234" width="128.7" height="1" fill="url(#tri)" opacity="0.97"/><rect x="95.2" y="235" width="13.2" height="1" fill="url(#tri)" opacity="0.10"/><rect x="98.5" y="236" width="6.6" height="1" fill="url(#tri)" opacity="0.05"/><rect x="98.6" y="0" width="6.4" height="1" fill="url(#cl)" opacity="1.00"/><rect x="98.6" y="1" width="6.4" height="1" fill="url(#cl)" opacity="1.00"/><rect x="98.6" y="2" width="6.4" height="1" fill="url(#cl)" opacity="0.60"/><rect x="98.6" y="3" width="6.4" height="1" fill="url(#cl)" opacity="1.00"/><rect x="98.6" y="4" width="6.4" height="1" fill="url(#cl)" opacity="1.00"/><rect x="98.6" y="5" width="6.4" height="1" fill="url(#cl)" opacity="1.00"/><rect x="98.6" y="6" width="6.4" height="1" fill="url(#cl)" opacity="0.80"/><rect x="98.6" y="38" width="6.4" height="1" fill="url(#cl)" opacity="1.00"/><rect x="98.6" y="39" width="6.4" height="1" fill="url(#cl)" opacity="1.00"/><rect x="98.6" y="40" width="6.4" height="1" fill="url(#cl)" opacity="0.93"/><rect x="98.6" y="41" width="6.4" height="1" fill="url(#cl)" opacity="0.89"/><rect x="98.6" y="42" width="6.4" height="1" fill="url(#cl)" opacity="0.93"/><rect x="98.6" y="43" width="6.4" height="1" fill="url(#cl)" opacity="1.00"/><rect x="98.6" y="44" width="6.4" height="1" fill="url(#cl)" opacity="1.00"/><rect x="98.6" y="45" width="6.4" height="1" fill="url(#cl)" opacity="1.00"/><rect x="98.6" y="46" width="6.4" height="1" fill="url(#cl)" opacity="1.00"/><rect x="98.6" y="47" width="6.4" height="1" fill="url(#cl)" opacity="1.00"/><rect x="98.6" y="48" width="6.4" height="1" fill="url(#cl)" opacity="1.00"/><rect x="98.6" y="49" width="6.4" height="1" fill="url(#cl)" opacity="0.91"/><rect x="98.6" y="50" width="6.4" height="1" fill="url(#cl)" opacity="1.00"/><rect x="98.6" y="51" width="6.4" height="1" fill="url(#cl)" opacity="1.00"/><rect x="98.6" y="52" width="6.4" height="1" fill="url(#cl)" opacity="0.91"/><rect x="98.6" y="53" width="6.4" height="1" fill="url(#cl)" opacity="0.93"/><rect x="98.6" y="54" width="6.4" height="1" fill="url(#cl)" opacity="1.00"/><rect x="98.6" y="55" width="6.4" height="1" fill="url(#cl)" opacity="1.00"/><rect x="98.6" y="56" width="6.4" height="1" fill="url(#cl)" opacity="0.94"/><rect x="98.6" y="57" width="6.4" height="1" fill="url(#cl)" opacity="0.90"/><rect x="98.6" y="58" width="6.4" height="1" fill="url(#cl)" opacity="0.35"/><rect x="98.6" y="59" width="6.4" height="1" fill="url(#cl)" opacity="0.90"/><rect x="98.6" y="60" width="6.4" height="1" fill="url(#cl)" opacity="1.00"/><rect x="98.6" y="61" width="6.4" height="1" fill="url(#cl)" opacity="1.00"/><rect x="98.6" y="62" width="6.4" height="1" fill="url(#cl)" opacity="1.00"/><rect x="98.6" y="63" width="6.4" height="1" fill="url(#cl)" opacity="0.93"/><rect x="98.6" y="64" width="6.4" height="1" fill="url(#cl)" opacity="0.90"/><rect x="98.6" y="65" width="6.4" height="1" fill="url(#cl)" opacity="0.96"/><rect x="98.6" y="66" width="6.4" height="1" fill="url(#cl)" opacity="1.00"/><rect x="98.6" y="67" width="6.4" height="1" fill="url(#cl)" opacity="1.00"/><rect x="98.6" y="68" width="6.4" height="1" fill="url(#cl)" opacity="1.00"/><rect x="98.6" y="69" width="6.4" height="1" fill="url(#cl)" opacity="1.00"/><rect x="98.6" y="70" width="6.4" height="1" fill="url(#cl)" opacity="0.92"/><rect x="98.6" y="71" width="6.4" height="1" fill="url(#cl)" opacity="1.00"/><rect x="98.6" y="72" width="6.4" height="1" fill="url(#cl)" opacity="1.00"/><rect x="98.6" y="73" width="6.4" height="1" fill="url(#cl)" opacity="0.91"/><rect x="98.6" y="74" width="6.4" height="1" fill="url(#cl)" opacity="0.91"/><rect x="98.6" y="75" width="6.4" height="1" fill="url(#cl)" opacity="0.95"/><rect x="98.6" y="76" width="6.4" height="1" fill="url(#cl)" opacity="1.00"/><rect x="98.6" y="77" width="6.4" height="1" fill="url(#cl)" opacity="1.00"/><rect x="98.6" y="78" width="6.4" height="1" fill="url(#cl)" opacity="1.00"/><rect x="98.6" y="79" width="6.4" height="1" fill="url(#cl)" opacity="0.90"/><rect x="98.6" y="80" width="6.4" height="1" fill="url(#cl)" opacity="0.89"/><rect x="98.6" y="81" width="6.4" height="1" fill="url(#cl)" opacity="0.91"/><rect x="98.6" y="82" width="6.4" height="1" fill="url(#cl)" opacity="1.00"/><rect x="98.6" y="83" width="6.4" height="1" fill="url(#cl)" opacity="1.00"/><rect x="98.6" y="84" width="6.4" height="1" fill="url(#cl)" opacity="0.92"/><rect x="98.6" y="85" width="6.4" height="1" fill="url(#cl)" opacity="0.96"/><rect x="98.6" y="86" width="6.4" height="1" fill="url(#cl)" opacity="1.00"/><rect x="98.6" y="87" width="6.4" height="1" fill="url(#cl)" opacity="1.00"/><rect x="98.6" y="88" width="6.4" height="1" fill="url(#cl)" opacity="1.00"/><rect x="98.6" y="89" width="6.4" height="1" fill="url(#cl)" opacity="1.00"/><rect x="98.6" y="90" width="6.4" height="1" fill="url(#cl)" opacity="1.00"/><rect x="98.6" y="91" width="6.4" height="1" fill="url(#cl)" opacity="1.00"/><rect x="98.6" y="92" width="6.4" height="1" fill="url(#cl)" opacity="0.92"/><rect x="98.6" y="93" width="6.4" height="1" fill="url(#cl)" opacity="1.00"/><rect x="98.6" y="94" width="6.4" height="1" fill="url(#cl)" opacity="1.00"/><rect x="98.6" y="95" width="6.4" height="1" fill="url(#cl)" opacity="0.91"/><rect x="98.6" y="96" width="6.4" height="1" fill="url(#cl)" opacity="0.92"/><rect x="98.6" y="97" width="6.4" height="1" fill="url(#cl)" opacity="1.00"/><rect x="98.6" y="98" width="6.4" height="1" fill="url(#cl)" opacity="1.00"/><rect x="98.6" y="99" width="6.4" height="1" fill="url(#cl)" opacity="1.00"/><rect x="98.6" y="100" width="6.4" height="1" fill="url(#cl)" opacity="0.35"/><rect x="98.6" y="102" width="6.4" height="1" fill="url(#cl)" opacity="0.35"/><rect x="98.6" y="103" width="6.4" height="1" fill="url(#cl)" opacity="0.94"/><rect x="98.6" y="104" width="6.4" height="1" fill="url(#cl)" opacity="1.00"/><rect x="98.6" y="105" width="6.4" height="1" fill="url(#cl)" opacity="1.00"/><rect x="98.6" y="106" width="6.4" height="1" fill="url(#cl)" opacity="1.00"/><rect x="98.6" y="107" width="6.4" height="1" fill="url(#cl)" opacity="1.00"/><rect x="98.6" y="108" width="6.4" height="1" fill="url(#cl)" opacity="1.00"/><rect x="98.6" y="109" width="6.4" height="1" fill="url(#cl)" opacity="1.00"/><rect x="98.6" y="110" width="6.4" height="1" fill="url(#cl)" opacity="1.00"/><rect x="98.6" y="111" width="6.4" height="1" fill="url(#cl)" opacity="1.00"/><rect x="98.6" y="112" width="6.4" height="1" fill="url(#cl)" opacity="0.91"/><rect x="98.6" y="113" width="6.4" height="1" fill="url(#cl)" opacity="0.91"/><rect x="98.6" y="114" width="6.4" height="1" fill="url(#cl)" opacity="0.94"/><rect x="98.6" y="115" width="6.4" height="1" fill="url(#cl)" opacity="1.00"/><rect x="98.6" y="116" width="6.4" height="1" fill="url(#cl)" opacity="1.00"/><rect x="98.6" y="117" width="6.4" height="1" fill="url(#cl)" opacity="1.00"/><rect x="98.6" y="118" width="6.4" height="1" fill="url(#cl)" opacity="1.00"/><rect x="98.6" y="119" width="6.4" height="1" fill="url(#cl)" opacity="0.95"/><rect x="98.6" y="120" width="6.4" height="1" fill="url(#cl)" opacity="0.91"/><rect x="98.6" y="121" width="6.4" height="1" fill="url(#cl)" opacity="0.91"/><rect x="98.6" y="122" width="6.4" height="1" fill="url(#cl)" opacity="0.96"/><rect x="98.6" y="123" width="6.4" height="1" fill="url(#cl)" opacity="1.00"/><rect x="98.6" y="124" width="6.4" height="1" fill="url(#cl)" opacity="1.00"/><rect x="98.6" y="125" width="6.4" height="1" fill="url(#cl)" opacity="1.00"/><rect x="98.6" y="126" width="6.4" height="1" fill="url(#cl)" opacity="1.00"/><rect x="98.6" y="127" width="6.4" height="1" fill="url(#cl)" opacity="0.93"/><rect x="98.6" y="128" width="6.4" height="1" fill="url(#cl)" opacity="0.90"/><rect x="98.6" y="129" width="6.4" height="1" fill="url(#cl)" opacity="0.94"/><rect x="98.6" y="130" width="6.4" height="1" fill="url(#cl)" opacity="1.00"/><rect x="98.6" y="131" width="6.4" height="1" fill="url(#cl)" opacity="1.00"/><rect x="98.6" y="132" width="6.4" height="1" fill="url(#cl)" opacity="1.00"/><rect x="98.6" y="133" width="6.4" height="1" fill="url(#cl)" opacity="1.00"/><rect x="98.6" y="134" width="6.4" height="1" fill="url(#cl)" opacity="1.00"/><rect x="98.6" y="135" width="6.4" height="1" fill="url(#cl)" opacity="1.00"/><rect x="98.6" y="136" width="6.4" height="1" fill="url(#cl)" opacity="1.00"/><rect x="98.6" y="137" width="6.4" height="1" fill="url(#cl)" opacity="1.00"/><rect x="98.6" y="138" width="6.4" height="1" fill="url(#cl)" opacity="1.00"/><rect x="98.6" y="139" width="6.4" height="1" fill="url(#cl)" opacity="1.00"/><rect x="98.6" y="140" width="6.4" height="1" fill="url(#cl)" opacity="0.96"/><rect x="98.6" y="141" width="6.4" height="1" fill="url(#cl)" opacity="0.91"/><rect x="98.6" y="142" width="6.4" height="1" fill="url(#cl)" opacity="0.91"/><rect x="98.6" y="143" width="6.4" height="1" fill="url(#cl)" opacity="0.95"/><rect x="98.6" y="144" width="6.4" height="1" fill="url(#cl)" opacity="1.00"/><rect x="98.6" y="145" width="6.4" height="1" fill="url(#cl)" opacity="1.00"/><rect x="98.6" y="146" width="6.4" height="1" fill="url(#cl)" opacity="1.00"/><rect x="98.6" y="147" width="6.4" height="1" fill="url(#cl)" opacity="0.93"/><rect x="98.6" y="148" width="6.4" height="1" fill="url(#cl)" opacity="0.90"/><rect x="98.6" y="149" width="6.4" height="1" fill="url(#cl)" opacity="0.95"/><rect x="98.6" y="150" width="6.4" height="1" fill="url(#cl)" opacity="1.00"/><rect x="98.6" y="151" width="6.4" height="1" fill="url(#cl)" opacity="1.00"/><rect x="98.6" y="152" width="6.4" height="1" fill="url(#cl)" opacity="1.00"/><rect x="98.6" y="153" width="6.4" height="1" fill="url(#cl)" opacity="1.00"/><rect x="98.6" y="154" width="6.4" height="1" fill="url(#cl)" opacity="1.00"/><rect x="98.6" y="155" width="6.4" height="1" fill="url(#cl)" opacity="0.93"/><rect x="98.6" y="159" width="6.4" height="1" fill="url(#cl)" opacity="0.91"/><rect x="98.6" y="160" width="6.4" height="1" fill="url(#cl)" opacity="1.00"/><rect x="98.6" y="161" width="6.4" height="1" fill="url(#cl)" opacity="1.00"/><rect x="98.6" y="162" width="6.4" height="1" fill="url(#cl)" opacity="1.00"/><rect x="98.6" y="163" width="6.4" height="1" fill="url(#cl)" opacity="1.00"/><rect x="98.6" y="164" width="6.4" height="1" fill="url(#cl)" opacity="1.00"/><rect x="98.6" y="165" width="6.4" height="1" fill="url(#cl)" opacity="1.00"/><rect x="98.6" y="166" width="6.4" height="1" fill="url(#cl)" opacity="0.91"/><rect x="98.6" y="167" width="6.4" height="1" fill="url(#cl)" opacity="0.94"/><rect x="98.6" y="168" width="6.4" height="1" fill="url(#cl)" opacity="1.00"/><rect x="98.6" y="169" width="6.4" height="1" fill="url(#cl)" opacity="1.00"/><rect x="98.6" y="170" width="6.4" height="1" fill="url(#cl)" opacity="0.92"/><rect x="98.6" y="171" width="6.4" height="1" fill="url(#cl)" opacity="1.00"/><rect x="98.6" y="172" width="6.4" height="1" fill="url(#cl)" opacity="1.00"/><rect x="98.6" y="173" width="6.4" height="1" fill="url(#cl)" opacity="1.00"/><rect x="98.6" y="174" width="6.4" height="1" fill="url(#cl)" opacity="1.00"/><rect x="98.6" y="175" width="6.4" height="1" fill="url(#cl)" opacity="1.00"/><rect x="98.6" y="176" width="6.4" height="1" fill="url(#cl)" opacity="1.00"/><rect x="98.6" y="177" width="6.4" height="1" fill="url(#cl)" opacity="0.96"/><rect x="98.6" y="178" width="6.4" height="1" fill="url(#cl)" opacity="0.91"/><rect x="98.6" y="179" width="6.4" height="1" fill="url(#cl)" opacity="0.91"/><rect x="98.6" y="180" width="6.4" height="1" fill="url(#cl)" opacity="0.96"/><rect x="98.6" y="181" width="6.4" height="1" fill="url(#cl)" opacity="1.00"/><rect x="98.6" y="182" width="6.4" height="1" fill="url(#cl)" opacity="1.00"/><rect x="98.6" y="183" width="6.4" height="1" fill="url(#cl)" opacity="1.00"/><rect x="98.6" y="184" width="6.4" height="1" fill="url(#cl)" opacity="1.00"/><rect x="98.6" y="185" width="6.4" height="1" fill="url(#cl)" opacity="0.91"/><rect x="98.6" y="186" width="6.4" height="1" fill="url(#cl)" opacity="0.92"/><rect x="98.6" y="187" width="6.4" height="1" fill="url(#cl)" opacity="1.00"/><rect x="98.6" y="188" width="6.4" height="1" fill="url(#cl)" opacity="1.00"/><rect x="98.6" y="189" width="6.4" height="1" fill="url(#cl)" opacity="1.00"/><rect x="98.6" y="190" width="6.4" height="1" fill="url(#cl)" opacity="1.00"/><rect x="98.6" y="191" width="6.4" height="1" fill="url(#cl)" opacity="1.00"/><rect x="98.6" y="192" width="6.4" height="1" fill="url(#cl)" opacity="1.00"/><rect x="98.6" y="193" width="6.4" height="1" fill="url(#cl)" opacity="1.00"/><rect x="98.6" y="194" width="6.4" height="1" fill="url(#cl)" opacity="1.00"/><rect x="98.6" y="195" width="6.4" height="1" fill="url(#cl)" opacity="1.00"/><rect x="98.6" y="196" width="6.4" height="1" fill="url(#cl)" opacity="1.00"/><rect x="98.6" y="197" width="6.4" height="1" fill="url(#cl)" opacity="0.92"/><rect x="98.6" y="198" width="6.4" height="1" fill="url(#cl)" opacity="0.92"/><rect x="98.6" y="199" width="6.4" height="1" fill="url(#cl)" opacity="1.00"/><rect x="98.6" y="200" width="6.4" height="1" fill="url(#cl)" opacity="1.00"/><rect x="98.6" y="201" width="6.4" height="1" fill="url(#cl)" opacity="1.00"/><rect x="98.6" y="202" width="6.4" height="1" fill="url(#cl)" opacity="1.00"/><rect x="98.6" y="203" width="6.4" height="1" fill="url(#cl)" opacity="1.00"/><rect x="98.6" y="204" width="6.4" height="1" fill="url(#cl)" opacity="0.92"/><rect x="98.6" y="205" width="6.4" height="1" fill="url(#cl)" opacity="0.92"/><rect x="98.6" y="206" width="6.4" height="1" fill="url(#cl)" opacity="1.00"/><rect x="98.6" y="207" width="6.4" height="1" fill="url(#cl)" opacity="1.00"/><rect x="98.6" y="208" width="6.4" height="1" fill="url(#cl)" opacity="1.00"/><rect x="98.6" y="209" width="6.4" height="1" fill="url(#cl)" opacity="1.00"/><rect x="98.6" y="210" width="6.4" height="1" fill="url(#cl)" opacity="1.00"/><rect x="98.6" y="211" width="6.4" height="1" fill="url(#cl)" opacity="1.00"/><rect x="98.6" y="212" width="6.4" height="1" fill="url(#cl)" opacity="0.35"/><rect x="98.6" y="215" width="6.4" height="1" fill="url(#cl)" opacity="0.35"/><rect x="98.6" y="216" width="6.4" height="1" fill="url(#cl)" opacity="1.00"/><rect x="98.6" y="217" width="6.4" height="1" fill="url(#cl)" opacity="1.00"/><rect x="98.6" y="218" width="6.4" height="1" fill="url(#cl)" opacity="1.00"/><rect x="98.6" y="219" width="6.4" height="1" fill="url(#cl)" opacity="1.00"/><rect x="98.6" y="220" width="6.4" height="1" fill="url(#cl)" opacity="1.00"/><rect x="98.6" y="221" width="6.4" height="1" fill="url(#cl)" opacity="1.00"/><rect x="98.6" y="222" width="6.4" height="1" fill="url(#cl)" opacity="0.91"/><rect x="98.6" y="223" width="6.4" height="1" fill="url(#cl)" opacity="0.93"/><rect x="98.6" y="224" width="6.4" height="1" fill="url(#cl)" opacity="1.00"/><rect x="98.6" y="225" width="6.4" height="1" fill="url(#cl)" opacity="1.00"/><rect x="98.6" y="226" width="6.4" height="1" fill="url(#cl)" opacity="1.00"/><rect x="98.6" y="227" width="6.4" height="1" fill="url(#cl)" opacity="1.00"/><rect x="98.6" y="228" width="6.4" height="1" fill="url(#cl)" opacity="1.00"/><rect x="98.6" y="229" width="6.4" height="1" fill="url(#cl)" opacity="1.00"/><rect x="98.6" y="230" width="6.4" height="1" fill="url(#cl)" opacity="0.92"/><rect x="98.6" y="231" width="6.4" height="1" fill="url(#cl)" opacity="1.00"/><rect x="98.6" y="232" width="6.4" height="1" fill="url(#cl)" opacity="1.00"/><rect x="98.6" y="233" width="6.4" height="1" fill="url(#cl)" opacity="1.00"/><rect x="98.6" y="234" width="6.4" height="1" fill="url(#cl)" opacity="1.00"/><rect x="98.6" y="235" width="6.4" height="1" fill="url(#cl)" opacity="0.35"/><rect x="98.6" y="236" width="6.4" height="1" fill="url(#cl)" opacity="0.35"/></g><rect x="0" y="157.0" width="335" height="1" fill="#000070" opacity="0.45"/></svg>
  <div class="abs" style="left:335px;top:140px;width:1px;height:474px;background:#5c5c5c;"></div>

  <!-- band buttons -->
  <div class="pill" style="left:352px;top:283px;">160</div>
  <div class="pill" style="left:403px;top:283px;">80</div>
  <div class="pill" style="left:454px;top:283px;">60</div>
  <div class="pill sel" style="left:352px;top:306px;">40</div>
  <div class="pill" style="left:403px;top:306px;">30</div>
  <div class="pill" style="left:454px;top:306px;">20</div>
  <div class="pill" style="left:352px;top:329px;">17</div>
  <div class="pill" style="left:403px;top:329px;">15</div>
  <div class="pill" style="left:454px;top:329px;">12</div>
  <div class="pill" style="left:352px;top:352px;">10</div>
  <div class="pill" style="left:403px;top:352px;">6</div>
  <div class="pill" style="left:454px;top:352px;">LFMF</div>
  <div class="pill" style="left:352px;top:375px;color:#f0c020;">VHF+</div>
  <div class="pill" style="left:403px;top:375px;color:#60d060;">WWV</div>
  <div class="pill" style="left:454px;top:375px;color:#f07040;">SWL</div>
  <!-- mode buttons -->
  <div class="pill" style="left:352px;top:519px;line-height:13px;">LSB</div>
  <div class="pill" style="left:403px;top:519px;line-height:13px;">USB</div>
  <div class="pill" style="left:454px;top:519px;line-height:13px;">DSB</div>
  <div class="pill sel" style="left:352px;top:542px;line-height:14.5px;">CWL</div>
  <div class="pill" style="left:403px;top:542px;line-height:13px;">CWU</div>
  <div class="pill" style="left:454px;top:542px;line-height:13px;">FM</div>
  <div class="pill" style="left:352px;top:565px;line-height:13px;">AM</div>
  <div class="pill" style="left:403px;top:565px;line-height:13px;">SAM</div>
  <div class="pill" style="left:454px;top:565px;line-height:13px;">SPEC</div>
  <div class="pill" style="left:352px;top:588px;line-height:13px;">DIGL</div>
  <div class="pill" style="left:403px;top:588px;line-height:13px;">DIGU</div>
  <div class="pill" style="left:454px;top:588px;line-height:13px;">DRM</div>
</div>
</body></html>
